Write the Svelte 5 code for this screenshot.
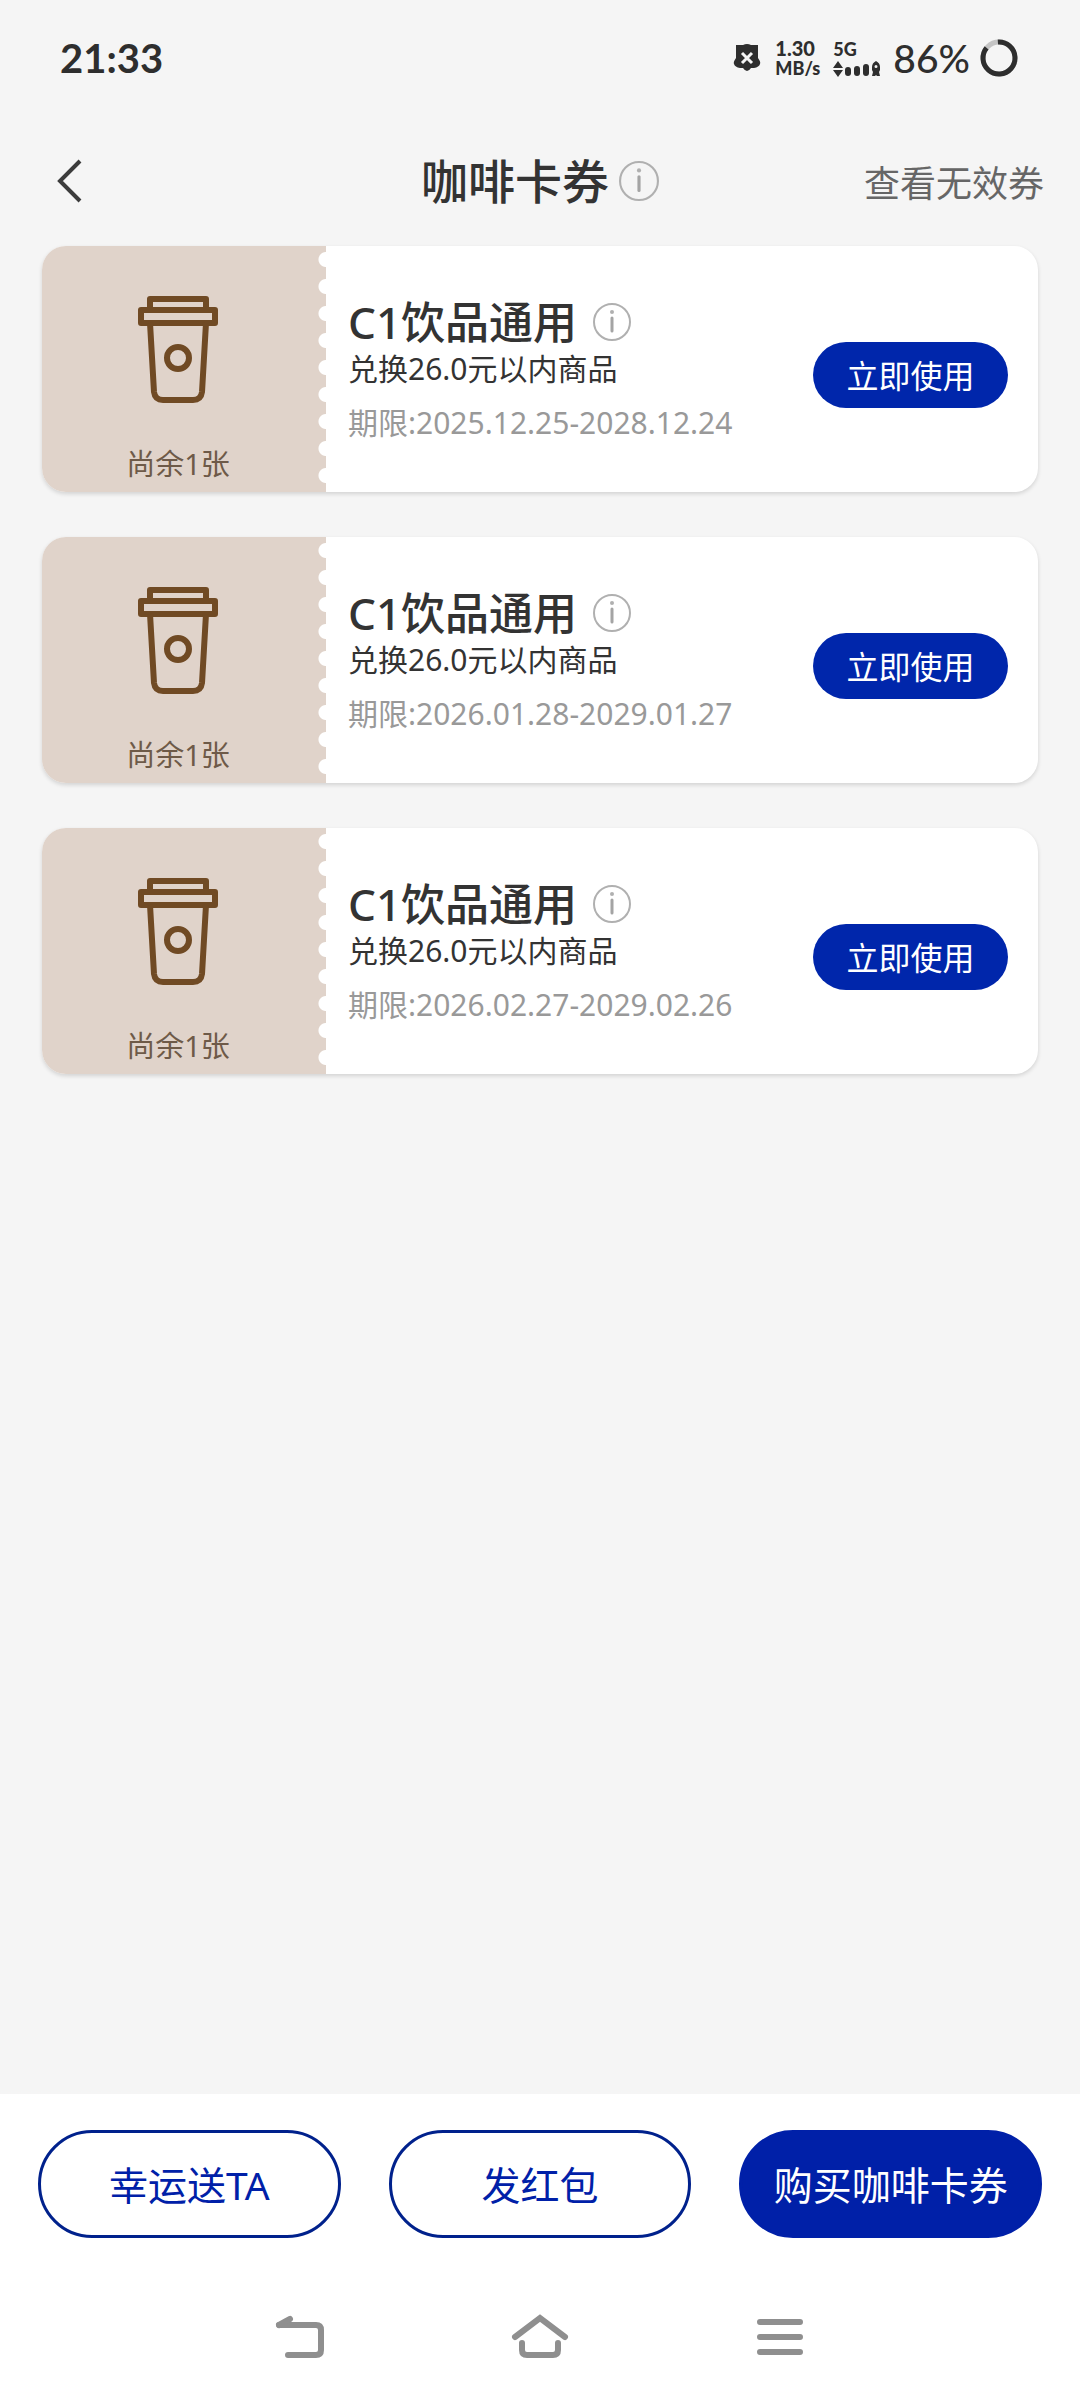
<script>
    const coupons = [
        { id: 1, title: 'C1饮品通用', desc: '兑换26.0元以内商品', from: '2025.12.25', to: '2028.12.24', left: 1 },
        { id: 2, title: 'C1饮品通用', desc: '兑换26.0元以内商品', from: '2026.01.28', to: '2029.01.27', left: 1 },
        { id: 3, title: 'C1饮品通用', desc: '兑换26.0元以内商品', from: '2026.02.27', to: '2029.02.26', left: 1 }
    ];
</script>

{#snippet info(size)}
    <svg width={size} height={size} viewBox="0 0 38 38" fill="none">
        <circle cx="19" cy="19" r="18" stroke="#b0b0b0" stroke-width="2" />
        <circle cx="19" cy="9" r="2" fill="#b0b0b0" />
        <path d="M19 15v13" stroke="#a4a4a4" stroke-width="3" stroke-linecap="round" />
    </svg>
{/snippet}

<div class="page">
    <div class="status">
        <span class="time">21:33</span>
        <div class="indicators">
            <svg width="28" height="30" viewBox="0 0 28 30">
                <path d="M3 2h7q4-2 8 0h7v13q3 4 2 6-1 3-6 4h-3q-2 3-4 3t-4-3H7q-5-1-6-4-1-2 2-6z" fill="#2e2e2e" />
                <path d="M9 10l10 10M19 10L9 20" stroke="#f5f5f5" stroke-width="3" />
            </svg>
            <div class="speed">
                <span class="rate">1.30</span>
                <span>MB/s</span>
            </div>
            <div class="signal">
                <span>5G</span>
                <svg width="48" height="16" viewBox="0 0 48 16" fill="#2e2e2e">
                    <path d="M5 0l5 7H0zM5 16l5-7H0z" />
                    <rect x="12" y="6" width="6" height="9" rx="3" />
                    <rect x="21" y="5" width="6" height="10" rx="3" />
                    <rect x="30" y="3" width="6" height="12" rx="3" />
                    <path fill-rule="evenodd" d="M43 0q4 2 4 6v3l-1 2 1 4h-3l-1-1-1 1h-3l1-4-1-2V6q0-4 4-6zm0 4a1.500 1.500 0 1 0 0 3 1.500 1.500 0 0 0 0-3z" />
                </svg>
            </div>
            <span class="battery">86%</span>
            <svg width="38" height="38" viewBox="0 0 38 38" fill="none" stroke-width="5">
                <circle cx="19" cy="19" r="16" stroke="#c4c4c4" />
                <circle cx="19" cy="19" r="16" stroke="#2e2e2e" pathLength="100" stroke-dasharray="87 13" transform="rotate(-94 19 19)" />
            </svg>
        </div>
    </div>

    <header>
        <button class="back" aria-label="返回">
            <svg width="26" height="44" viewBox="0 0 26 44" fill="none" stroke="#3c3c3c" stroke-width="4">
                <path d="M24 2L4 22l20 20" />
            </svg>
        </button>
        <h1>咖啡卡券 <button aria-label="说明">{@render info(40)}</button></h1>
        <a class="invalid" href="#invalid">查看无效券</a>
    </header>

    <main>
        {#each coupons as coupon (coupon.id)}
            <article class="coupon">
                <div class="stub">
                    <svg width="82" height="110" viewBox="0 0 82 110" fill="none" stroke="#704a24" stroke-width="6" stroke-linejoin="round">
                        <path d="M13 16V5h56v11" />
                        <rect x="4" y="16" width="74" height="13" />
                        <path d="M13 29l4 69q1 8 9 8h30q8 0 9-8l4-69" />
                        <circle cx="41" cy="64" r="11" />
                    </svg>
                    <span>尚余{coupon.left}张</span>
                </div>
                <div class="detail">
                    <h2>{coupon.title} <button aria-label="说明">{@render info(38)}</button></h2>
                    <p class="desc">{coupon.desc}</p>
                    <p class="date">期限:{coupon.from}-{coupon.to}</p>
                </div>
                <button class="use">立即使用</button>
            </article>
        {/each}
    </main>

    <footer>
        <button>幸运送TA</button>
        <button>发红包</button>
        <button class="primary">购买咖啡卡券</button>
    </footer>

    <nav>
        <button aria-label="返回">
            <svg width="54" height="48" viewBox="0 0 54 48">
                <path d="M6 12h37q5 0 5 5v20q0 5-5 5H15" />
                <path d="M6 12l11-6" />
            </svg>
        </button>
        <button aria-label="主页">
            <svg width="58" height="48" viewBox="0 0 58 48">
                <path d="M4 24L29 5l25 19M11 30v7q0 5 5 5h26q5 0 5-5v-7" />
            </svg>
        </button>
        <button aria-label="最近任务">
            <svg width="54" height="48" viewBox="0 0 54 48">
                <path d="M7 9h40M7 24h40M7 39h40" />
            </svg>
        </button>
    </nav>
</div>

<style>
    :global(body) {
        margin: 0;
        background-color: #f5f5f5;
    }

    .page {
        display: flex;
        flex-direction: column;
        min-height: 100vh;
        font-family: "Noto Sans", "Noto Sans CJK SC", sans-serif;
        color: #333;
    }

    button {
        padding: 0;
        border: none;
        background: none;
        font: inherit;
        color: inherit;
        cursor: pointer;
    }

    svg {
        display: block;
    }

    .status {
        display: flex;
        align-items: center;
        justify-content: space-between;
        height: 116px;
        padding: 0 62px 0 60px;
        font-family: Lato, sans-serif;
        color: #2e2e2e;
    }

    .time {
        font-size: 40px;
        font-weight: 700;
    }

    .indicators {
        display: flex;
        align-items: center;
    }

    .speed, .signal {
        display: flex;
        flex-direction: column;
        font-size: 18px;
        font-weight: 900;
        line-height: 20px;
    }

    .speed {
        width: 46px;
        margin: 0 12px 0 14px;
    }

    .rate {
        font-size: 20px;
    }

    .signal {
        gap: 2px;
        margin-right: 12px;
    }

    .battery {
        margin-right: 10px;
        font-size: 39px;
        font-weight: 500;
    }

    header {
        display: grid;
        grid-template-columns: 1fr auto 1fr;
        align-items: center;
        height: 130px;
        padding: 0 36px;
    }

    .back {
        justify-self: start;
        margin-left: 20px;
    }

    h1, h2 {
        display: flex;
        align-items: center;
        margin: 0;
        font-weight: 500;
    }

    h1 {
        gap: 10px;
        font-size: 47px;
        line-height: 60px;
    }

    .invalid {
        justify-self: end;
        font-size: 36px;
        color: #666;
        text-decoration: none;
    }

    main {
        flex: 1;
        display: flex;
        flex-direction: column;
        gap: 45px;
        padding: 0 42px;
    }

    .coupon {
        display: flex;
        align-items: center;
        height: 246px;
        border-radius: 24px;
        background: #fff;
        box-shadow: 0 2px 4px rgba(0, 0, 0, 0.14);
        overflow: hidden;
    }

    /* perforated edge: white half circles repeated down the right side */
    .stub {
        display: flex;
        flex-direction: column;
        align-items: center;
        justify-content: space-between;
        box-sizing: border-box;
        width: 284px;
        height: 100%;
        padding: 48px 12px 8px 0;
        background: radial-gradient(circle at 100% 50%, #fff 7px, #e0d3ca 8px) right top / 8px 27px repeat-y, #e0d3ca;
        font-size: 29px;
        line-height: 40px;
        color: #6e5a48;
    }

    .detail {
        flex: 1;
        padding-left: 22px;
    }

    h2 {
        gap: 16px;
        font-size: 44px;
        line-height: 54px;
    }

    p {
        margin: 0;
        line-height: 40px;
    }

    .desc {
        font-size: 30px;
    }

    .date {
        margin-top: 14px;
        font-size: 30px;
        color: #999;
    }

    .use {
        width: 195px;
        height: 66px;
        margin: 12px 30px 0 0;
        padding-bottom: 2px;
        border-radius: 33px;
        background: #0026ab;
        font-size: 32px;
        color: #fff;
    }

    footer {
        display: flex;
        gap: 48px;
        padding: 36px 38px;
        background: #fff;
    }

    footer button {
        flex: 1;
        height: 108px;
        padding-bottom: 2px;
        border: 3px solid #00218c;
        border-radius: 54px;
        font-size: 39px;
        color: #0020a8;
    }

    footer .primary {
        border-color: #0020a8;
        background: #0020a8;
        color: #fff;
    }

    nav {
        display: flex;
        justify-content: center;
        height: 126px;
        background: #fff;
    }

    nav button {
        display: flex;
        align-items: center;
        justify-content: center;
        width: 240px;
    }

    nav svg {
        fill: none;
        stroke: #8f8f8f;
        stroke-width: 6;
        stroke-linecap: round;
    }
</style>
